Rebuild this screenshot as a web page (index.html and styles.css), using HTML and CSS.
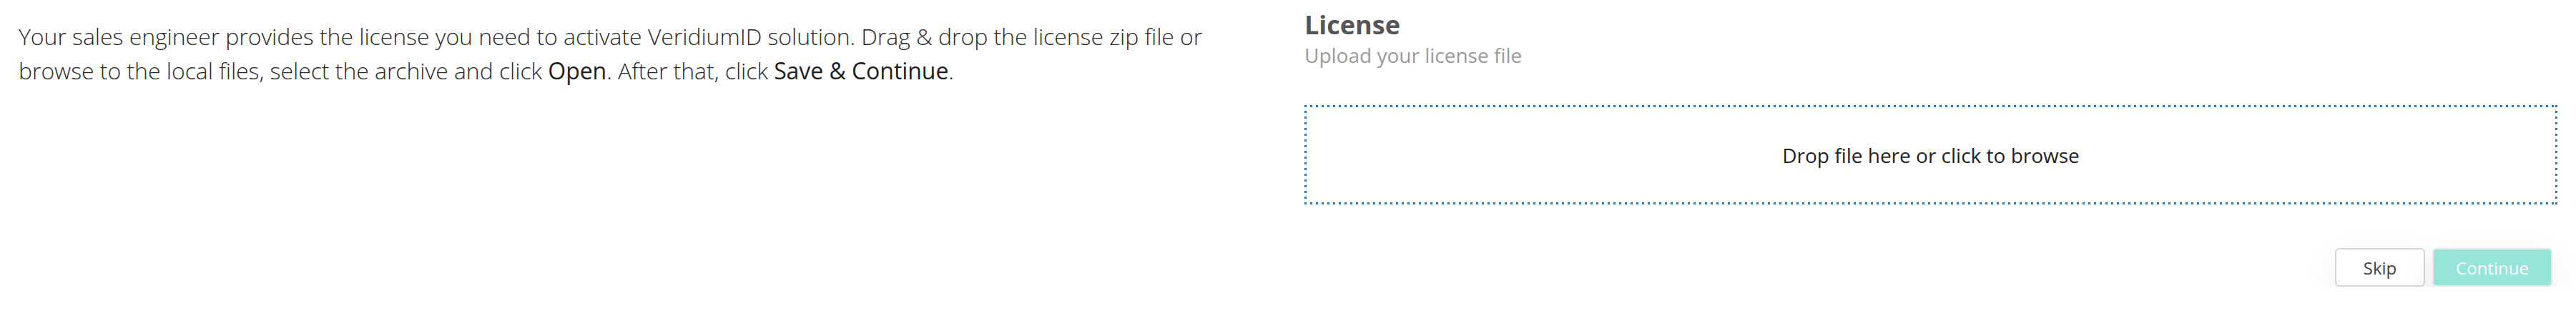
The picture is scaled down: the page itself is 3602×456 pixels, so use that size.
FILE: index.html
```html
<!DOCTYPE html>
<html lang="en">
<head>
  <meta charset="UTF-8">
  <title>License</title>
  <link rel="stylesheet" href="styles.css">
</head>
<body>
  <div class="page">
    <div class="intro">
      <p>Your sales engineer provides the license you need to activate VeridiumID solution. Drag &amp; drop the license zip file or browse to the local files, select the archive and click <strong>Open</strong>. After that, click <strong>Save &amp; Continue</strong>.</p>
    </div>

    <div class="panel">
      <h2 class="title">License</h2>
      <div class="subtitle">Upload your license file</div>

      <div class="dropzone">Drop file here or click to browse</div>

      <div class="actions">
        <button class="btn btn-skip">Skip</button>
        <button class="btn btn-continue" disabled>Continue</button>
      </div>
    </div>
  </div>
</body>
</html>
```

FILE: styles.css
```css
body {
  margin: 0;
  background: #fff;
  font-family: "Open Sans", "Noto Sans", sans-serif;
  color: #2b2b2b;
}

.page {
  display: grid;
  grid-template-columns: 1fr 1fr;
  column-gap: 46px;
  padding: 0 26px;
}

.intro {
  padding-right: 40px;
}

.intro p {
  margin: 27px 0 0;
  font-size: 32px;
  line-height: 48px;
  font-weight: 300;
  letter-spacing: -0.05px;
}

.intro strong {
  font-weight: 400;
  color: #1e1e1e;
}

.title {
  margin: 13px 0 0;
  font-size: 36px;
  line-height: 44px;
  font-weight: 700;
  color: #555;
}

.subtitle {
  font-size: 28px;
  line-height: 40px;
  color: #9a9a9a;
}

/* dotted frame drawn with gradients so the dots are spaced like the design */
.dropzone {
  margin-top: 50px;
  height: 139px;
  display: flex;
  align-items: center;
  justify-content: center;
  font-size: 28px;
  color: #222;
  cursor: pointer;
  background:
    linear-gradient(to right, #0b82d6 3px, transparent 3px) top left / 8px 3px repeat-x,
    linear-gradient(to right, #0b82d6 3px, transparent 3px) bottom left / 8px 3px repeat-x,
    linear-gradient(to bottom, #0b82d6 3px, transparent 3px) top left / 3px 8px repeat-y,
    linear-gradient(to bottom, #0b82d6 3px, transparent 3px) top right / 3px 8px repeat-y;
}

.actions {
  display: flex;
  justify-content: flex-end;
  gap: 10px;
  margin-top: 61px;
  padding-right: 7px;
}

.btn {
  height: 54px;
  border-radius: 6px;
  font-family: inherit;
  font-size: 24px;
  box-shadow: 0 16px 50px rgba(0, 0, 0, 0.08);
  cursor: pointer;
}

.btn-skip {
  width: 126px;
  background: #fff;
  border: 2px solid #d6d6d6;
  color: #444;
}

.btn-continue {
  width: 168px;
  background: #95e5da;
  border: 2px solid #e8e8e8;
  color: #fff;
  cursor: default;
}
```
